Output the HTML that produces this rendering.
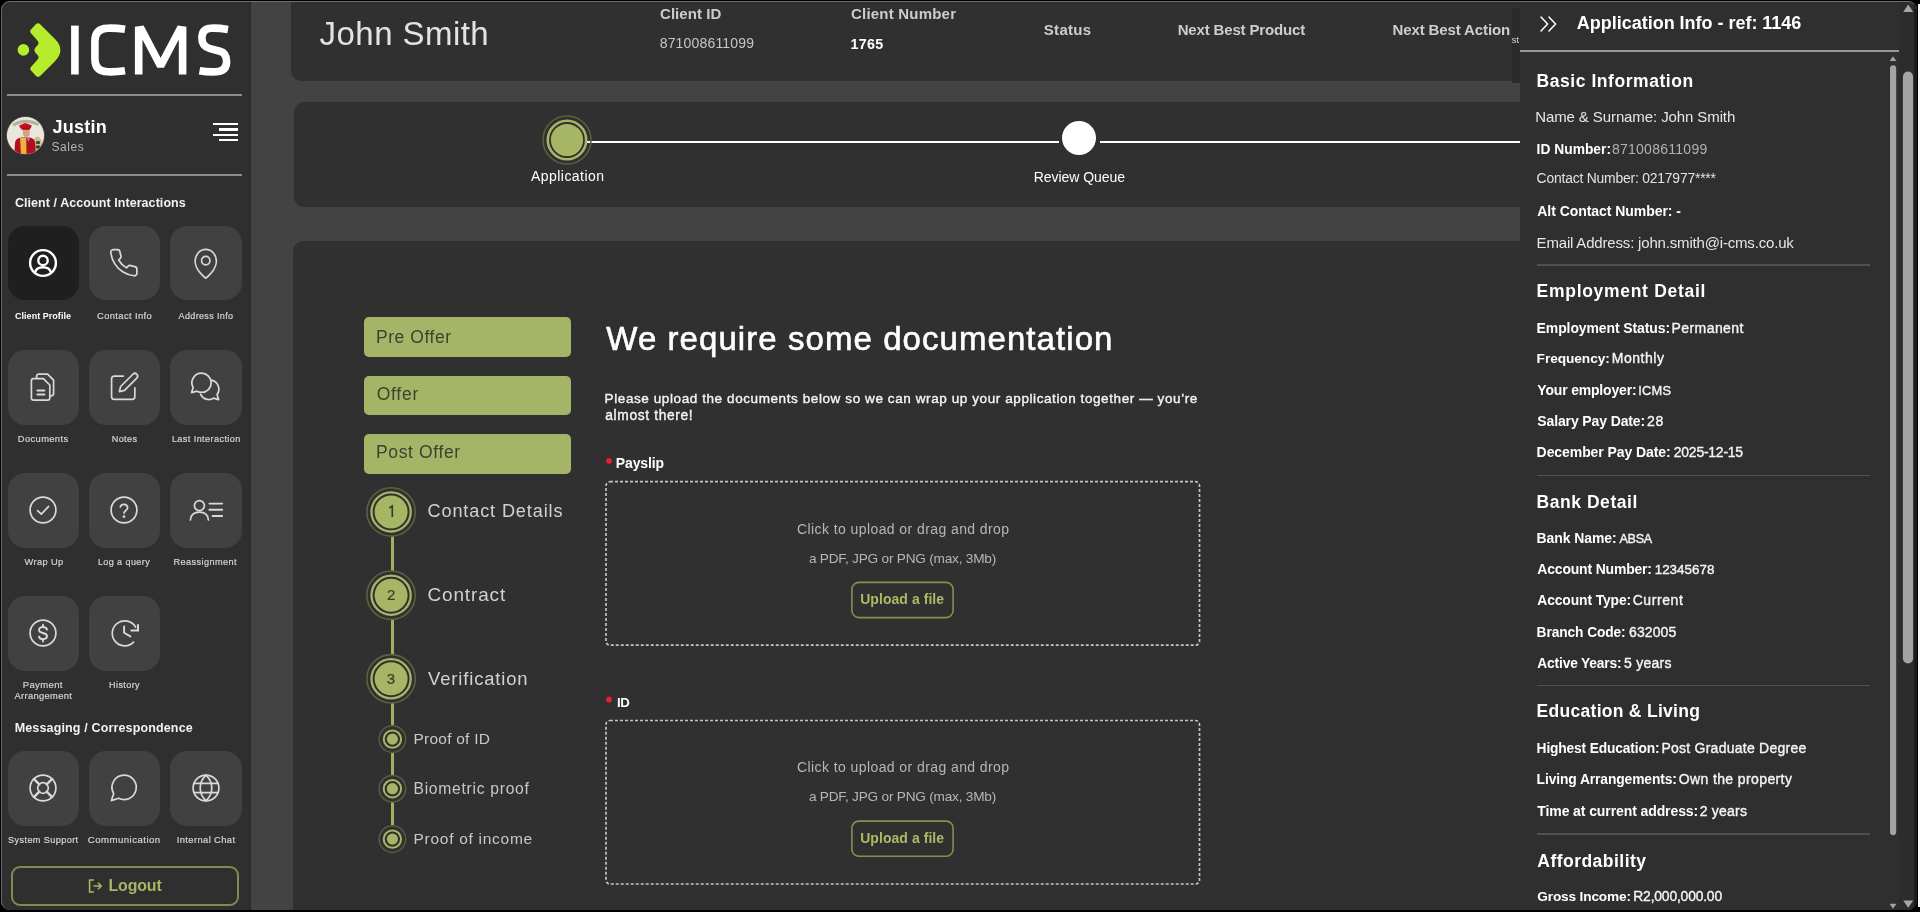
<!DOCTYPE html>
<html>
<head>
<meta charset="utf-8">
<title>ICMS</title>
<style>
*{box-sizing:border-box;margin:0;padding:0}
html,body{width:1920px;height:912px;overflow:hidden;background:#000}
body{font-family:"Liberation Sans",sans-serif;color:#fff;position:relative}
.abs{position:absolute}
.t{position:absolute;white-space:nowrap;line-height:1}
.b{font-weight:bold}
.m{-webkit-text-stroke:0.2px currentColor}
.m2{-webkit-text-stroke:0.38px currentColor}
.m3{-webkit-text-stroke:0.6px currentColor}
#frame{position:absolute;left:1px;top:1px;width:1916px;height:909px;background:#434343;border-radius:9px;overflow:hidden}
#in{position:absolute;left:-1px;top:-1px;width:1920px;height:912px;filter:blur(0.45px)}
#side{position:absolute;left:0;top:0;width:250px;height:912px;background:#2f2f2f}
.hr{position:absolute;height:2px;background:#8d8d8d}
.tile{position:absolute;width:71.5px;height:75px;border-radius:17px;background:#414141}
.tile.on{background:#1f1f1f}
.ic{position:absolute;fill:none;stroke:#d9d9d9;stroke-width:1.7;stroke-linecap:round;stroke-linejoin:round;overflow:visible}
.ic.on{stroke:#fff;stroke-width:2.4}
.card{position:absolute;background:#303030;border-radius:10px}
.sep{position:absolute;left:1537px;width:333px;height:1.5px;background:#505050}
.pill{position:absolute;left:363.5px;width:207px;height:40px;border-radius:5px;background:#a5b567}
</style>
</head>
<body>
<div id="frame"><div id="in">
  <!-- MAIN CARDS -->
  <div class="card" style="left:291px;top:-10px;width:1700px;height:91px"></div>
  <div class="card" style="left:294px;top:101.5px;width:1700px;height:105px"></div>
  <div class="card" style="left:293px;top:241px;width:1700px;height:700px"></div>

  <!-- progress -->
  <div class="abs" style="left:587px;top:140.6px;width:472px;height:2.8px;background:#fff"></div>
  <div class="abs" style="left:1099.5px;top:140.6px;width:430px;height:2.8px;background:#fff"></div>
  <svg class="abs" style="left:537px;top:110px;width:60px;height:60px;overflow:visible" viewBox="-30 -30 60 60">
    <circle r="24" fill="none" stroke="#5a6140" stroke-width="1.5"/>
    <circle r="19.2" fill="none" stroke="#a6b665" stroke-width="2.6"/>
    <circle r="16.1" fill="#a6b665"/>
  </svg>
  <div class="abs" style="left:1062px;top:121px;width:34.4px;height:34.4px;border-radius:50%;background:#fff"></div>

  <!-- pills -->
  <div class="pill" style="top:317.2px"></div>
  <div class="pill" style="top:376px;height:39.2px"></div>
  <div class="pill" style="top:433.8px;height:40.2px"></div>

  <!-- stepper -->
  <div class="abs" style="left:391.2px;top:535px;width:2.5px;height:40px;background:#a1af60"></div>
  <div class="abs" style="left:391.2px;top:618px;width:2.5px;height:40px;background:#a1af60"></div>
  <div class="abs" style="left:391.2px;top:700px;width:2.5px;height:130px;background:#a1af60"></div>
  <svg class="abs" style="left:0;top:0;width:1920px;height:912px;overflow:visible" viewBox="0 0 1920 912">
    <g id="big">
      <g transform="translate(391.1 511.9)"><circle r="24.2" fill="#303030" stroke="#5a6140" stroke-width="1.6"/><circle r="19.6" fill="none" stroke="#a6b665" stroke-width="2.3"/><circle r="16.5" fill="#a6b665"/></g>
      <g transform="translate(391.1 595.2)"><circle r="24.2" fill="#303030" stroke="#5a6140" stroke-width="1.6"/><circle r="19.6" fill="none" stroke="#a6b665" stroke-width="2.3"/><circle r="16.5" fill="#a6b665"/></g>
      <g transform="translate(391.1 678.8)"><circle r="24.2" fill="#303030" stroke="#5a6140" stroke-width="1.6"/><circle r="19.6" fill="none" stroke="#a6b665" stroke-width="2.3"/><circle r="16.5" fill="#a6b665"/></g>
    </g>
    <g id="small">
      <g transform="translate(392.4 739.1)"><circle r="13.3" fill="#303030" stroke="#565d3e" stroke-width="1.5"/><circle r="8.7" fill="none" stroke="#a6b665" stroke-width="2"/><circle r="5.6" fill="#a6b665"/></g>
      <g transform="translate(392.4 788.7)"><circle r="13.3" fill="#303030" stroke="#565d3e" stroke-width="1.5"/><circle r="8.7" fill="none" stroke="#a6b665" stroke-width="2"/><circle r="5.6" fill="#a6b665"/></g>
      <g transform="translate(392.4 839.1)"><circle r="13.3" fill="#303030" stroke="#565d3e" stroke-width="1.5"/><circle r="8.7" fill="none" stroke="#a6b665" stroke-width="2"/><circle r="5.6" fill="#a6b665"/></g>
    </g>
    <path d="M389.3 507.9 L392.3 506.1 V516.9" fill="none" stroke="#3b3d2c" stroke-width="1.7" stroke-linejoin="miter"/>
    <!-- dashed boxes -->
    <rect x="606" y="481.7" width="593.5" height="163.5" rx="4" fill="none" stroke="#c4c4c4" stroke-width="1.7" stroke-dasharray="3 2"/>
    <rect x="606" y="720.5" width="593.5" height="163.5" rx="4" fill="none" stroke="#c4c4c4" stroke-width="1.7" stroke-dasharray="3 2"/>
    <!-- upload buttons -->
    <rect x="851.9" y="582.4" width="101.2" height="35.2" rx="7" fill="none" stroke="#868f50" stroke-width="1.6"/>
    <rect x="851.9" y="821.1" width="101.2" height="35.2" rx="7" fill="none" stroke="#868f50" stroke-width="1.6"/>
    <!-- red stars -->
    <g fill="#e3212e"><circle cx="609" cy="460.8" r="2.9"/><circle cx="609" cy="699.5" r="2.9"/></g>
  </svg>

  <!-- SIDEBAR -->
  <div id="side"></div>
  <div class="abs" style="left:248.5px;top:0;width:2.5px;height:912px;background:#2b2b2b"></div>
  <!-- logo -->
  <svg class="abs" style="left:0;top:0;width:250px;height:100px" viewBox="0 0 250 100">
    <circle cx="23.4" cy="49.9" r="5.8" fill="#b7ec2d"/>
    <path d="M35.6 24.6 Q38 22 40.4 24.4 L55 39 Q60.4 44.5 60.4 50.1 Q60.4 55.7 55 61.2 L40.4 75.8 Q38 78.2 35.6 75.6 L31 70.6 Q29.2 68.4 31.4 66.4 L37 60.2 Q39.2 58 38.4 56.2 Q37.6 54.6 36 53.4 Q34.4 51.8 34.4 50.1 Q34.4 48.4 36 46.8 Q37.6 45.6 38.4 44 Q39.2 42.2 37 40 L31.4 33.8 Q29.2 31.8 31 29.6 Z" fill="#b7ec2d"/>
    <g fill="none" stroke="#fff" stroke-width="7.6" stroke-linejoin="round">
      <path d="M74.9 25.6 V74.5"/>
      <path d="M125 29.2 C118 28.2 112 28 107.5 28.2 Q94.9 28.6 94.9 41 V59 Q94.9 71.4 107.5 71.8 C112 72 118 71.8 125 70.8" stroke-linejoin="round"/>
      <path d="M138.7 74.5 V30 L141.5 29.6 L160.6 66 L179.8 29.6 L182.6 30 V74.5" stroke-linejoin="miter" stroke-miterlimit="2"/>
      <path d="M228 29.4 C221 28.3 215 28 211 28.2 Q201.9 28.6 201.9 38 Q201.9 46.5 210 48.6 L220 51.2 Q226.6 53 226.6 61.6 Q226.6 71.4 216 71.8 C211 72 205 71.7 199.5 70.7"/>
    </g>
  </svg>
  <div class="hr" style="left:7px;top:94px;width:235px"></div>
  <div class="hr" style="left:7px;top:173.5px;width:235px"></div>
  <!-- avatar -->
  <svg class="abs" style="left:5.5px;top:115.7px;width:39px;height:39px" viewBox="0 0 39 39">
    <defs><clipPath id="av"><circle cx="19.5" cy="19.5" r="18.6"/></clipPath></defs>
    <circle cx="19.5" cy="19.5" r="19.3" fill="#56504a"/>
    <g clip-path="url(#av)">
      <rect width="39" height="39" fill="#ece7de"/>
      <path d="M6 8 Q19 0 33 7 L32 10 Q19 4 8 10.5 Z" fill="#b5b29e"/>
      <path d="M27.4 34 V24 Q31.4 17 35.6 24 V34 Z" fill="#cdbd8e"/>
      <rect x="30" y="25" width="4" height="3" rx="1" fill="#3e4a33"/><rect x="30" y="29.6" width="4" height="3" rx="1" fill="#2f3a2a"/>
      <path d="M8.4 39 L9 27 Q9.6 22.4 15 21.6 L24 21.6 Q28.6 22.4 29.2 27 L30 39 Z" fill="#b10f1d"/>
      <path d="M14 22 L15 39 H20.6 L20.2 22 Z" fill="#e7b640"/>
      <path d="M20.6 22 L22.4 26 L24.2 22 Z" fill="#8f7fb0"/>
      <ellipse cx="20.3" cy="16.8" rx="3.5" ry="4.3" fill="#d7a07c"/>
      <path d="M13 9.6 L19.4 7 L25.9 9.4 L24.6 12.6 H14.4 Z" fill="#c2101f"/>
      <rect x="15.6" y="11.6" width="8.4" height="2.2" fill="#a80d1a"/>
    </g>
  </svg>
  <!-- menu icon -->
  <div class="abs" style="left:213.2px;top:123.1px;width:25px;height:2.4px;background:#fff"></div>
  <div class="abs" style="left:219px;top:128.4px;width:19.2px;height:2.4px;background:#fff"></div>
  <div class="abs" style="left:213.2px;top:133.7px;width:25px;height:2.4px;background:#fff"></div>
  <div class="abs" style="left:219px;top:138.8px;width:19.2px;height:2.4px;background:#fff"></div>

  <!-- tiles -->
  <div class="tile on" style="left:7.5px;top:226.4px;height:74px"></div>
  <div class="tile" style="left:88.5px;top:226.4px;height:74px"></div>
  <div class="tile" style="left:170px;top:226.4px;height:74px"></div>
  <div class="tile" style="left:7.5px;top:349.5px"></div>
  <div class="tile" style="left:88.5px;top:349.5px"></div>
  <div class="tile" style="left:170px;top:349.5px"></div>
  <div class="tile" style="left:7.5px;top:472.5px"></div>
  <div class="tile" style="left:88.5px;top:472.5px"></div>
  <div class="tile" style="left:170px;top:472.5px"></div>
  <div class="tile" style="left:7.5px;top:596px"></div>
  <div class="tile" style="left:88.5px;top:596px"></div>
  <div class="tile" style="left:7.5px;top:751px"></div>
  <div class="tile" style="left:88.5px;top:751px"></div>
  <div class="tile" style="left:170px;top:751px"></div>
  <svg class="ic on" style="left:28.70px;top:249.40px;width:28px;height:28px" viewBox="0 0 28 28"><circle cx="14" cy="14" r="12.9"/><circle cx="14" cy="11.4" r="4.7"/><path d="M5.9 23.6 C7 19.8 10.2 18.3 14 18.3 S21 19.8 22.1 23.6"/></svg>
  <svg class="ic" style="left:108.45px;top:247.35px;width:31.5px;height:31.5px;stroke-width:1.3" viewBox="0 0 24 24"><path d="M22 16.92v3a2 2 0 0 1-2.18 2 19.79 19.79 0 0 1-8.63-3.07 19.5 19.5 0 0 1-6-6 19.79 19.79 0 0 1-3.07-8.67A2 2 0 0 1 4.11 2h3a2 2 0 0 1 2 1.72 12.84 12.84 0 0 0 .7 2.81 2 2 0 0 1-.45 2.11L8.09 9.91a16 16 0 0 0 6 6l1.27-1.27a2 2 0 0 1 2.11-.45 12.84 12.84 0 0 0 2.81.7A2 2 0 0 1 22 16.92z"/></svg>
  <svg class="ic" style="left:189.65px;top:247.65px;width:31.5px;height:31.5px;stroke-width:1.3" viewBox="0 0 24 24"><g transform="translate(12 0) scale(0.9 1) translate(-12 0)"><path d="M21 10c0 7-9 13-9 13s-9-6-9-13a9 9 0 0 1 18 0z"/></g><circle cx="12" cy="9.6" r="3.2"/></svg>
  <svg class="ic" style="left:28.60px;top:373.00px;width:28px;height:28px" viewBox="0 0 28 28"><path d="M7.6 4.8 V3.4 Q7.6 1.2 9.8 1.2 H18.6 L24.6 7.2 V20.6 Q24.6 22.8 22.4 22.8 H21.2"/><path d="M4.6 5.6 H14.4 L20.8 12 V25 Q20.8 27.2 18.6 27.2 H4.6 Q2.4 27.2 2.4 25 V7.8 Q2.4 5.6 4.6 5.6 Z"/><path d="M8.4 17.6 H15.4 M8.4 21.6 H15.4" stroke-width="2"/></svg>
  <svg class="ic" style="left:108.80px;top:371.30px;width:31px;height:31px;stroke-width:1.3" viewBox="0 0 24 24"><path d="M11 4H4a2 2 0 0 0-2 2v14a2 2 0 0 0 2 2h14a2 2 0 0 0 2-2v-7"/><path d="M18.5 2.5a2.121 2.121 0 0 1 3 3L12 15l-4 1 1-4 9.5-9.5z"/></svg>
  <svg class="ic" style="left:190.40px;top:372.20px;width:30px;height:30px;stroke-width:1.75" viewBox="0 0 30 30"><path d="M11.6 1.2 A9.6 9.6 0 0 1 11.6 20.4 A9.6 9.6 0 0 1 7 19.2 L1.6 20.6 L3.2 15.6 A9.6 9.6 0 0 1 11.6 1.2 Z"/><path d="M20.6 8.2 A9 9 0 0 1 27 22.6 L28.6 27.6 L23.4 26.2 A9 9 0 0 1 10.6 22.4"/></svg>
  <svg class="ic" style="left:28.80px;top:495.80px;width:28px;height:28px" viewBox="0 0 28 28"><circle cx="14" cy="14" r="12.9"/><path d="M8.6 14.6 L12.3 18.2 L19.6 10.4"/></svg>
  <svg class="ic" style="left:110.10px;top:495.80px;width:28px;height:28px" viewBox="0 0 28 28"><circle cx="14" cy="14" r="12.9"/><path d="M10.3 11 A3.8 3.8 0 0 1 17.7 11.6 C17.7 14.4 14 14.6 14 17.2"/><circle cx="14" cy="20.6" r="0.6" fill="#d9d9d9"/></svg>
  <svg class="ic" style="left:188.80px;top:493.00px;width:34px;height:34px" viewBox="0 0 34 34"><circle cx="10.4" cy="12.6" r="5"/><path d="M1.4 27 C1.8 21.6 5.4 19.2 10.4 19.2 S19 21.6 19.4 27"/><path d="M20.4 10.6 H33.2 M20.4 16.8 H33.2 M23.6 23 H33.2" stroke-width="1.9"/></svg>
  <svg class="ic" style="left:28.70px;top:619.40px;width:28px;height:28px" viewBox="0 0 28 28"><circle cx="14" cy="14" r="12.9"/><path d="M18 10.6 C17.4 8.8 15.8 8 14 8 C11.8 8 10 9.1 10 11 C10 12.9 11.8 13.5 14 14 C16.2 14.5 18 15.2 18 17.1 C18 19 16.2 20.2 14 20.2 C12.2 20.2 10.6 19.4 10 17.6 M14 5.8 V8 M14 20.2 V22.4" stroke-width="1.9"/></svg>
  <svg class="ic" style="left:110.50px;top:619.30px;width:28px;height:28px" viewBox="0 0 28 28"><path d="M24.6 8.15 A12.5 12.5 0 1 0 22.6 23.2"/><path d="M19.6 11.6 H27 V5.2" stroke-width="2" stroke-linejoin="miter" stroke-linecap="butt"/><path d="M13.1 7.4 V13.8 L19.4 17.4" stroke-width="1.9"/></svg>
  <svg class="ic" style="left:28.70px;top:773.90px;width:28px;height:28px" viewBox="0 0 28 28"><circle cx="14" cy="14" r="12.9"/><circle cx="14" cy="14" r="5.3"/><path d="M4.9 4.9 L10.3 10.3 M17.7 17.7 L23.1 23.1 M23.1 4.9 L17.7 10.3 M10.3 17.7 L4.9 23.1" stroke-width="2.4"/></svg>
  <svg class="ic" style="left:109.70px;top:773.90px;width:28px;height:28px" viewBox="0 0 28 28"><path d="M14 1.2 A12.2 12.2 0 1 1 8.6 24.3 L1.4 26.6 L3.7 19.6 A12.2 12.2 0 0 1 14 1.2 Z"/></svg>
  <svg class="ic" style="left:191.50px;top:773.90px;width:28px;height:28px" viewBox="0 0 28 28"><circle cx="14" cy="14" r="12.9"/><path d="M14 1.1 C18.4 5.4 19.8 9.6 19.8 14 C19.8 18.4 18.4 22.6 14 26.9 C9.6 22.6 8.2 18.4 8.2 14 C8.2 9.6 9.6 5.4 14 1.1 Z"/><path d="M2.2 9.4 H25.8 M2.2 18.6 H25.8"/></svg>
  <!-- logout -->
  <div class="abs" style="left:10.5px;top:866px;width:228px;height:40px;border:2px solid #7f8b50;border-radius:9px"></div>
  <svg class="abs" style="left:87.5px;top:878.5px;width:15px;height:14px;overflow:visible" viewBox="0 0 15 14" fill="none" stroke="#a7b766" stroke-width="1.6">
    <path d="M6 1 H1.6 V13 H6"/><path d="M5.5 7 H13 M10 3.8 L13.2 7 L10 10.2"/>
  </svg>

  <!-- RIGHT PANEL -->
  <div class="abs" style="left:1511.6px;top:8px;width:8px;height:75px;background:#2b2b2b"></div>
  <div class="t" style="left:1511.8px;top:34.5px;font-size:9.5px;color:#d6d6d6;width:7.6px;overflow:hidden">st</div>
  <div id="rp" class="abs" style="left:1519.5px;top:0;width:400px;height:912px;background:#2f2f2f"></div>
  <div class="hr" style="left:1519.5px;top:49.6px;width:379.5px;background:#999"></div>
  <svg class="abs" style="left:1540px;top:15.5px;width:17px;height:16px;overflow:visible" viewBox="0 0 17 16" fill="none" stroke="#fff" stroke-width="1.5" stroke-linecap="round" stroke-linejoin="round">
    <path d="M1 1 L7.6 8 L1 15"/><path d="M9 1 L15.6 8 L9 15"/>
  </svg>
  <div class="sep" style="top:264.3px"></div>
  <div class="sep" style="top:474.7px"></div>
  <div class="sep" style="top:684.7px"></div>
  <div class="sep" style="top:833px"></div>
  <!-- inner scrollbar -->
  <svg class="abs" style="left:1886px;top:52px;width:34px;height:860px" viewBox="1886 52 34 860">
    <path d="M1889.6 61 L1893 56.2 L1896.4 61 Z" fill="#a3a3a3"/>
    <rect x="1890" y="65.2" width="6.2" height="770" rx="3.1" fill="#a3a3a3"/>
    <path d="M1889.6 903.8 L1893 908.8 L1896.4 903.8 Z" fill="#a3a3a3"/>
  </svg>
  <!-- outer scrollbar -->
  <svg class="abs" style="left:1896px;top:0;width:24px;height:912px" viewBox="1896 0 24 912">
    <rect x="1899" y="0" width="15" height="912" fill="#2c2c2c"/><rect x="1914" y="0" width="4" height="912" fill="#1c1c1c"/>
    <path d="M1903.2 12 L1908.2 4.4 L1913.2 12 Z" fill="#a6a6a6"/>
    <rect x="1902.9" y="71.6" width="10.2" height="592" rx="5.1" fill="#a3a3a3"/>
    <path d="M1903.2 900.4 L1908.2 907.8 L1913.2 900.4 Z" fill="#a6a6a6"/>
  </svg>
  <div class="t b" style="left:52.60px;top:118.00px;font-size:18px;color:#ffffff;letter-spacing:0.217px;">Justin</div>
  <div class="t" style="left:51.50px;top:141.00px;font-size:12px;color:#b4b4b4;letter-spacing:0.567px;">Sales</div>
  <div class="t b" style="left:14.90px;top:197.00px;font-size:12.5px;color:#f2f2f2;letter-spacing:0.067px;">Client / Account Interactions</div>
  <div class="t b" style="left:14.70px;top:722.00px;font-size:12.5px;color:#f2f2f2;letter-spacing:0.146px;">Messaging / Correspondence</div>
  <div class="t b" style="left:15.00px;top:312.00px;font-size:9px;color:#ffffff;letter-spacing:0.037px;">Client Profile</div>
  <div class="t m" style="left:97.00px;top:312.00px;font-size:9.36px;color:#d4d4d4;letter-spacing:0.392px;">Contact Info</div>
  <div class="t m" style="left:178.60px;top:312.00px;font-size:9px;color:#d4d4d4;letter-spacing:0.352px;">Address Info</div>
  <div class="t m" style="left:17.80px;top:435.00px;font-size:9.33px;color:#d4d4d4;letter-spacing:0.389px;">Documents</div>
  <div class="t m" style="left:111.70px;top:435.00px;font-size:9.09px;color:#d4d4d4;letter-spacing:0.395px;">Notes</div>
  <div class="t m" style="left:171.90px;top:435.00px;font-size:9.05px;color:#d4d4d4;letter-spacing:0.436px;">Last Interaction</div>
  <div class="t m" style="left:24.50px;top:558.00px;font-size:9.26px;color:#d4d4d4;letter-spacing:0.395px;">Wrap Up</div>
  <div class="t m" style="left:97.90px;top:558.00px;font-size:9px;color:#d4d4d4;letter-spacing:0.425px;">Log a query</div>
  <div class="t m" style="left:173.50px;top:558.00px;font-size:9.19px;color:#d4d4d4;letter-spacing:0.396px;">Reassignment</div>
  <div class="t m" style="left:22.70px;top:680.00px;font-size:9.5px;color:#d4d4d4;letter-spacing:0.383px;">Payment</div>
  <div class="t m" style="left:14.40px;top:691.00px;font-size:9.4px;color:#d4d4d4;letter-spacing:0.330px;">Arrangement</div>
  <div class="t m" style="left:109.10px;top:681.00px;font-size:9.05px;color:#d4d4d4;letter-spacing:0.391px;">History</div>
  <div class="t m" style="left:8.10px;top:836.00px;font-size:9.13px;color:#d4d4d4;letter-spacing:0.391px;">System Support</div>
  <div class="t m" style="left:87.80px;top:835.00px;font-size:9.63px;color:#d4d4d4;letter-spacing:0.460px;">Communication</div>
  <div class="t m" style="left:176.80px;top:836.00px;font-size:9.36px;color:#d4d4d4;letter-spacing:0.392px;">Internal Chat</div>
  <div class="t b" style="left:108.40px;top:878.00px;font-size:15.93px;color:#a7b766;letter-spacing:-0.107px;">Logout</div>
  <div class="t" style="left:319.60px;top:17.00px;font-size:33px;color:#e3e3e3;letter-spacing:0.445px;">John Smith</div>
  <div class="t b" style="left:660.00px;top:6.00px;font-size:15px;color:#cdcdcd;letter-spacing:0.057px;">Client ID</div>
  <div class="t" style="left:659.70px;top:36.00px;font-size:14px;color:#c6c6c6;letter-spacing:0.172px;">871008611099</div>
  <div class="t b" style="left:851.00px;top:6.00px;font-size:15px;color:#cdcdcd;letter-spacing:0.207px;">Client Number</div>
  <div class="t b" style="left:850.60px;top:37.00px;font-size:14.3px;color:#ffffff;letter-spacing:0.229px;">1765</div>
  <div class="t b" style="left:1043.80px;top:22.00px;font-size:15px;color:#cdcdcd;letter-spacing:0.291px;">Status</div>
  <div class="t b" style="left:1177.70px;top:22.00px;font-size:15px;color:#cdcdcd;letter-spacing:-0.158px;">Next Best Product</div>
  <div class="t b" style="left:1392.50px;top:22.00px;font-size:15px;color:#cdcdcd;letter-spacing:-0.118px;">Next Best Action</div>
  <div class="t" style="left:531.10px;top:169.00px;font-size:14px;color:#ffffff;letter-spacing:0.440px;">Application</div>
  <div class="t" style="left:1033.80px;top:170.00px;font-size:14px;color:#ffffff;letter-spacing:-0.048px;">Review Queue</div>
  <div class="t" style="left:376.00px;top:329.00px;font-size:17.5px;color:#3e412d;letter-spacing:0.552px;">Pre Offer</div>
  <div class="t" style="left:376.70px;top:386.00px;font-size:17.5px;color:#3e412d;letter-spacing:0.752px;">Offer</div>
  <div class="t" style="left:376.00px;top:444.00px;font-size:17.5px;color:#3e412d;letter-spacing:0.626px;">Post Offer</div>
  <div class="t m3" style="left:606.30px;top:322.00px;font-size:33px;color:#ffffff;letter-spacing:1.064px;">We require some documentation</div>
  <div class="t m2" style="left:604.60px;top:392.00px;font-size:13.5px;color:#f4f4f4;letter-spacing:0.590px;">Please upload the documents below so we can wrap up your application together — you’re</div>
  <div class="t m2" style="left:605.30px;top:409.00px;font-size:13.78px;color:#f4f4f4;letter-spacing:0.643px;">almost there!</div>
  <div class="t" style="left:797.00px;top:522.00px;font-size:14px;color:#b6b6b6;letter-spacing:0.415px;">Click to upload or drag and drop</div>
  <div class="t" style="left:808.90px;top:552.00px;font-size:13.64px;color:#b6b6b6;letter-spacing:-0.210px;">a PDF, JPG or PNG (max, 3Mb)</div>
  <div class="t b" style="left:860.20px;top:592.00px;font-size:14px;color:#abbb64;letter-spacing:0.055px;">Upload a file</div>
  <div class="t" style="left:797.00px;top:760.00px;font-size:14px;color:#b6b6b6;letter-spacing:0.415px;">Click to upload or drag and drop</div>
  <div class="t" style="left:808.90px;top:790.00px;font-size:13.64px;color:#b6b6b6;letter-spacing:-0.210px;">a PDF, JPG or PNG (max, 3Mb)</div>
  <div class="t b" style="left:860.20px;top:831.00px;font-size:14px;color:#abbb64;letter-spacing:0.055px;">Upload a file</div>
  <div class="t b" style="left:615.80px;top:457.00px;font-size:13.97px;color:#ffffff;letter-spacing:-0.104px;">Payslip</div>
  <div class="t b" style="left:616.90px;top:696.00px;font-size:13.22px;color:#ffffff;letter-spacing:-0.219px;">ID</div>
  <div class="t" style="left:427.50px;top:502.00px;font-size:18.11px;color:#d2d2d2;letter-spacing:0.872px;">Contact Details</div>
  <div class="t" style="left:427.50px;top:586.00px;font-size:18.94px;color:#d2d2d2;letter-spacing:0.875px;">Contract</div>
  <div class="t" style="left:428.10px;top:670.00px;font-size:18.46px;color:#d2d2d2;letter-spacing:0.845px;">Verification</div>
  <div class="t" style="left:413.50px;top:731.00px;font-size:15.5px;color:#c8c8c8;letter-spacing:0.231px;">Proof of ID</div>
  <div class="t" style="left:413.50px;top:781.00px;font-size:15.67px;color:#c8c8c8;letter-spacing:0.722px;">Biometric proof</div>
  <div class="t" style="left:413.50px;top:831.00px;font-size:15.52px;color:#c8c8c8;letter-spacing:0.716px;">Proof of income</div>
  <div class="t m" style="left:387.10px;top:587.00px;font-size:15px;color:#3b3d2c;">2</div>
  <div class="t m" style="left:386.70px;top:671.00px;font-size:15px;color:#3b3d2c;">3</div>
  <div class="t b" style="left:1576.80px;top:14.00px;font-size:18px;color:#ffffff;letter-spacing:-0.017px;">Application Info - ref: 1146</div>
  <div class="t b" style="left:1536.60px;top:73.00px;font-size:17.5px;color:#ffffff;letter-spacing:0.549px;">Basic Information</div>
  <div class="t" style="left:1535.20px;top:109.00px;font-size:15px;color:#e6e6e6;letter-spacing:-0.100px;">Name &amp; Surname: John Smith</div>
  <div class="t b" style="left:1536.60px;top:143.00px;font-size:13.78px;color:#ffffff;letter-spacing:0.024px;">ID Number:</div>
  <div class="t" style="left:1611.90px;top:142.00px;font-size:14px;color:#b2b2b2;letter-spacing:0.272px;">871008611099</div>
  <div class="t" style="left:1536.60px;top:172.00px;font-size:13.88px;color:#e2e2e2;letter-spacing:-0.191px;">Contact Number: 0217977****</div>
  <div class="t b" style="left:1537.30px;top:204.00px;font-size:14px;color:#ffffff;letter-spacing:-0.054px;">Alt Contact Number: -</div>
  <div class="t" style="left:1536.60px;top:235.00px;font-size:15px;color:#e6e6e6;letter-spacing:-0.179px;">Email Address: john.smith@i-cms.co.uk</div>
  <div class="t b" style="left:1536.60px;top:283.00px;font-size:17.5px;color:#ffffff;letter-spacing:0.703px;">Employment Detail</div>
  <div class="t b" style="left:1536.60px;top:494.00px;font-size:17.5px;color:#ffffff;letter-spacing:0.539px;">Bank Detail</div>
  <div class="t b" style="left:1536.60px;top:703.00px;font-size:17.5px;color:#ffffff;letter-spacing:0.283px;">Education &amp; Living</div>
  <div class="t b" style="left:1537.30px;top:853.00px;font-size:17.5px;color:#ffffff;letter-spacing:0.470px;">Affordability</div>
  <div class="t b" style="left:1536.60px;top:321.00px;font-size:13.98px;color:#ffffff;letter-spacing:-0.092px;">Employment Status:</div>
  <div class="t m2" style="left:1671.60px;top:321.00px;font-size:14px;color:#f4f4f4;letter-spacing:0.414px;">Permanent</div>
  <div class="t b" style="left:1536.60px;top:352.00px;font-size:13.69px;color:#ffffff;letter-spacing:-0.065px;">Frequency:</div>
  <div class="t m2" style="left:1611.70px;top:351.00px;font-size:14px;color:#f4f4f4;letter-spacing:0.545px;">Monthly</div>
  <div class="t b" style="left:1537.30px;top:384.00px;font-size:13.97px;color:#ffffff;letter-spacing:-0.164px;">Your employer:</div>
  <div class="t m2" style="left:1638.20px;top:385.00px;font-size:12.82px;color:#f4f4f4;letter-spacing:0.256px;">ICMS</div>
  <div class="t b" style="left:1537.30px;top:414.00px;font-size:14px;color:#ffffff;letter-spacing:-0.122px;">Salary Pay Date:</div>
  <div class="t m2" style="left:1647.10px;top:414.00px;font-size:14px;color:#f4f4f4;letter-spacing:0.522px;">28</div>
  <div class="t b" style="left:1536.60px;top:445.00px;font-size:14px;color:#ffffff;letter-spacing:-0.077px;">December Pay Date:</div>
  <div class="t m2" style="left:1673.80px;top:446.00px;font-size:13.93px;color:#f4f4f4;letter-spacing:-0.213px;">2025-12-15</div>
  <div class="t b" style="left:1536.60px;top:532.00px;font-size:13.96px;color:#ffffff;letter-spacing:-0.062px;">Bank Name:</div>
  <div class="t m2" style="left:1619.40px;top:533.00px;font-size:12.6px;color:#f4f4f4;letter-spacing:-0.270px;">ABSA</div>
  <div class="t b" style="left:1537.30px;top:563.00px;font-size:13.96px;color:#ffffff;letter-spacing:-0.169px;">Account Number:</div>
  <div class="t m2" style="left:1654.70px;top:563.00px;font-size:13.45px;color:#f4f4f4;letter-spacing:-0.014px;">12345678</div>
  <div class="t b" style="left:1537.30px;top:594.00px;font-size:13.83px;color:#ffffff;letter-spacing:-0.101px;">Account Type:</div>
  <div class="t m2" style="left:1632.70px;top:593.00px;font-size:14px;color:#f4f4f4;letter-spacing:0.569px;">Current</div>
  <div class="t b" style="left:1536.60px;top:626.00px;font-size:13.74px;color:#ffffff;letter-spacing:-0.086px;">Branch Code:</div>
  <div class="t m2" style="left:1629.10px;top:625.00px;font-size:14px;color:#f4f4f4;letter-spacing:0.076px;">632005</div>
  <div class="t b" style="left:1537.30px;top:657.00px;font-size:13.77px;color:#ffffff;letter-spacing:-0.161px;">Active Years:</div>
  <div class="t m2" style="left:1623.90px;top:656.00px;font-size:14px;color:#f4f4f4;letter-spacing:0.280px;">5 years</div>
  <div class="t b" style="left:1536.60px;top:742.00px;font-size:13.75px;color:#ffffff;letter-spacing:-0.140px;">Highest Education:</div>
  <div class="t m2" style="left:1661.40px;top:741.00px;font-size:14px;color:#f4f4f4;letter-spacing:0.253px;">Post Graduate Degree</div>
  <div class="t b" style="left:1536.60px;top:773.00px;font-size:13.84px;color:#ffffff;letter-spacing:-0.106px;">Living Arrangements:</div>
  <div class="t m2" style="left:1678.70px;top:772.00px;font-size:14px;color:#f4f4f4;letter-spacing:0.387px;">Own the property</div>
  <div class="t b" style="left:1537.30px;top:804.00px;font-size:14px;color:#ffffff;letter-spacing:-0.097px;">Time at current address:</div>
  <div class="t m2" style="left:1699.70px;top:804.00px;font-size:14px;color:#f4f4f4;letter-spacing:0.213px;">2 years</div>
  <div class="t b" style="left:1537.30px;top:890.00px;font-size:13.66px;color:#ffffff;letter-spacing:-0.160px;">Gross Income:</div>
  <div class="t m2" style="left:1633.30px;top:890.00px;font-size:13.83px;color:#f4f4f4;letter-spacing:-0.161px;">R2,000,000.00</div>
</div></div>
<!-- window frame -->
<div class="abs" style="left:1px;top:1px;width:1916px;height:909px;border-radius:9px;border-top:1.5px solid #6d6d6d;border-left:1.5px solid #6a6a6a;border-right:0;border-bottom:0;pointer-events:none"></div>
<div class="abs" style="left:1917.5px;top:4px;width:2.5px;height:903px;background:#fafafa"></div>
</body>
</html>
